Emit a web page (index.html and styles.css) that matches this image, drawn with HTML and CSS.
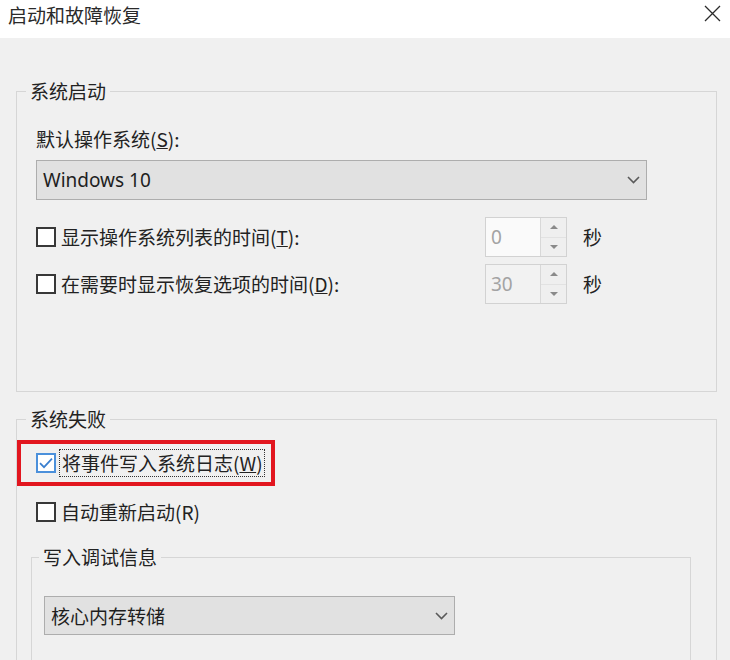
FILE: index.html
```html
<!DOCTYPE html>
<html lang="zh-CN">
<head>
<meta charset="utf-8">
<title>启动和故障恢复</title>
<link rel="stylesheet" href="styles.css">
</head>
<body>
<div class="dialog">
  <header class="titlebar">
    <span class="title">启动和故障恢复</span>
    <svg class="close" width="17" height="17" viewBox="0 0 17 17" aria-label="关闭"><path d="M1 1 L16 16 M16 1 L1 16" stroke="#2b2b2b" stroke-width="1.3" fill="none"/></svg>
  </header>
  <main class="content">
    <fieldset class="group">
      <legend>系统启动</legend>
      <div class="group-body startup-body">
        <div class="field-label">默认操作系统(<u>S</u>):</div>
        <div class="combo combo-os">
          <span class="combo-text">Windows 10</span>
          <svg class="chevron" width="13" height="8" viewBox="0 0 13 8"><path d="M1 1 L6.5 6.5 L12 1" stroke="#5a5a5a" stroke-width="1.6" fill="none"/></svg>
        </div>
        <div class="spin-row first-row">
          <label class="check"><span class="box"></span><span class="check-text">显示操作系统列表的时间(<u>T</u>):</span></label>
          <div class="spin spin-focus"><span class="spin-value">0</span><span class="arrows"><span class="arrow-btn"><span class="tri-up"></span></span><span class="arrow-btn"><span class="tri-down"></span></span></span></div>
          <span class="unit">秒</span>
        </div>
        <div class="spin-row second-row">
          <label class="check"><span class="box"></span><span class="check-text">在需要时显示恢复选项的时间(<u>D</u>):</span></label>
          <div class="spin"><span class="spin-value">30</span><span class="arrows"><span class="arrow-btn"><span class="tri-up"></span></span><span class="arrow-btn"><span class="tri-down"></span></span></span></div>
          <span class="unit">秒</span>
        </div>
      </div>
    </fieldset>

    <fieldset class="group failure">
      <legend>系统失败</legend>
      <div class="group-body failure-body">
        <div class="highlight">
          <label class="check">
            <span class="box checked"><svg width="16" height="16" viewBox="0 0 16 16"><path d="M2 8.2 L6 12.2 L14 3.6" stroke="#3a7fcf" stroke-width="1.7" fill="none"/></svg></span>
            <span class="check-text focus">将事件写入系统日志(<u>W</u>)</span>
          </label>
        </div>
        <label class="check restart-row"><span class="box"></span><span class="check-text">自动重新启动(R)</span></label>
        <fieldset class="group inner">
          <legend>写入调试信息</legend>
          <div class="group-body inner-body">
            <div class="combo combo-dump">
              <span class="combo-text cjk">核心内存转储</span>
              <svg class="chevron" width="13" height="8" viewBox="0 0 13 8"><path d="M1 1 L6.5 6.5 L12 1" stroke="#5a5a5a" stroke-width="1.6" fill="none"/></svg>
            </div>
          </div>
        </fieldset>
      </div>
    </fieldset>
  </main>
</div>
</body>
</html>
```

FILE: styles.css
```css
* { box-sizing: border-box; }

html, body {
  margin: 0;
  padding: 0;
}

body {
  width: 730px;
  height: 660px;
  overflow: hidden;
  background: #f0f0f0;
  font-family: "Noto Sans CJK SC", "Noto Sans", sans-serif;
  font-size: 19px;
  line-height: 24px;
  color: #222;
}

.titlebar {
  height: 38px;
  background: #fff;
  display: flex;
  justify-content: space-between;
  align-items: flex-start;
  padding: 3px 9px 0 8px;
}

.title {
  color: #2a2a2a;
}

.close {
  margin-top: 2px;
}

.content {
  padding: 41px 13px 0 16px;
}

.group {
  margin: 0;
  padding: 0;
  min-width: 0;
  border: 1px solid #d6d6d6;
}

.group > legend {
  margin-left: 9px;
  padding: 0 4px;
  line-height: 24px;
}

.startup-body {
  padding: 24px 0 87px 19px;
}

.field-label {
  line-height: 24px;
}

.combo {
  display: flex;
  align-items: center;
  justify-content: space-between;
  background: #e1e1e1;
  border: 1px solid #adadad;
  padding: 0 6px 0 6px;
}

.combo-text {
  font-family: "Noto Sans", "Noto Sans CJK SC", sans-serif;
  color: #1e1e1e;
}

.combo-text.cjk {
  font-family: "Noto Sans CJK SC", sans-serif;
}

.combo-os {
  margin-top: 9px;
  width: 611px;
  height: 40px;
}

.spin-row {
  display: grid;
  grid-template-columns: 449px 82px auto;
  align-items: center;
}

.first-row { margin-top: 17px; }
.second-row { margin-top: 7px; }

.check {
  display: flex;
  align-items: center;
  gap: 5px;
}

.box {
  width: 20px;
  height: 20px;
  flex: none;
  border: 2px solid #383838;
  background: #fff;
  display: flex;
  align-items: center;
  justify-content: center;
}

.box.checked {
  border-color: #4b90db;
}

.spin {
  display: flex;
  height: 40px;
  border: 1px solid #d2d2d2;
  background: #f2f2f2;
}

.spin.spin-focus {
  background: #fafafa;
}

.spin-value {
  flex: 1;
  display: flex;
  align-items: center;
  padding-left: 5px;
  font-family: "Noto Sans", sans-serif;
  color: #a3a3a3;
}

.arrows {
  width: 26px;
  display: flex;
  flex-direction: column;
  border-left: 1px solid #d8d8d8;
  background: #efefef;
}

.arrow-btn {
  flex: 1;
  display: flex;
  align-items: center;
  justify-content: center;
}

.arrow-btn + .arrow-btn {
  border-top: 1px solid #e2e2e2;
}

.tri-up {
  width: 0;
  height: 0;
  border-left: 4px solid transparent;
  border-right: 4px solid transparent;
  border-bottom: 4px solid #8a8a8a;
}

.tri-down {
  width: 0;
  height: 0;
  border-left: 4px solid transparent;
  border-right: 4px solid transparent;
  border-top: 4px solid #8a8a8a;
}

.unit {
  margin-left: 16px;
  color: #222;
}

.failure {
  margin-top: 15px;
}

.failure-body {
  padding: 9px 0 60px 19px;
}

.highlight {
  display: flex;
  width: max-content;
  margin-left: -19px;
  height: 46px;
  align-items: center;
  border: 4px solid #e2161f;
  padding: 0 7px 0 15px;
}

.highlight .check {
  gap: 4px;
}

.check-text.focus {
  outline: 1px dotted #333;
  outline-offset: 0;
  padding: 0 1px 0 2px;
  line-height: 26px;
}

.restart-row {
  margin-top: 14px;
}

.inner {
  margin: 21px 0 0 -5px;
  width: 660px;
}

.inner > legend {
  margin-left: 7px;
}

.inner-body {
  padding: 27px 0 60px 12px;
}

.combo-dump {
  width: 411px;
  height: 39px;
}
```
